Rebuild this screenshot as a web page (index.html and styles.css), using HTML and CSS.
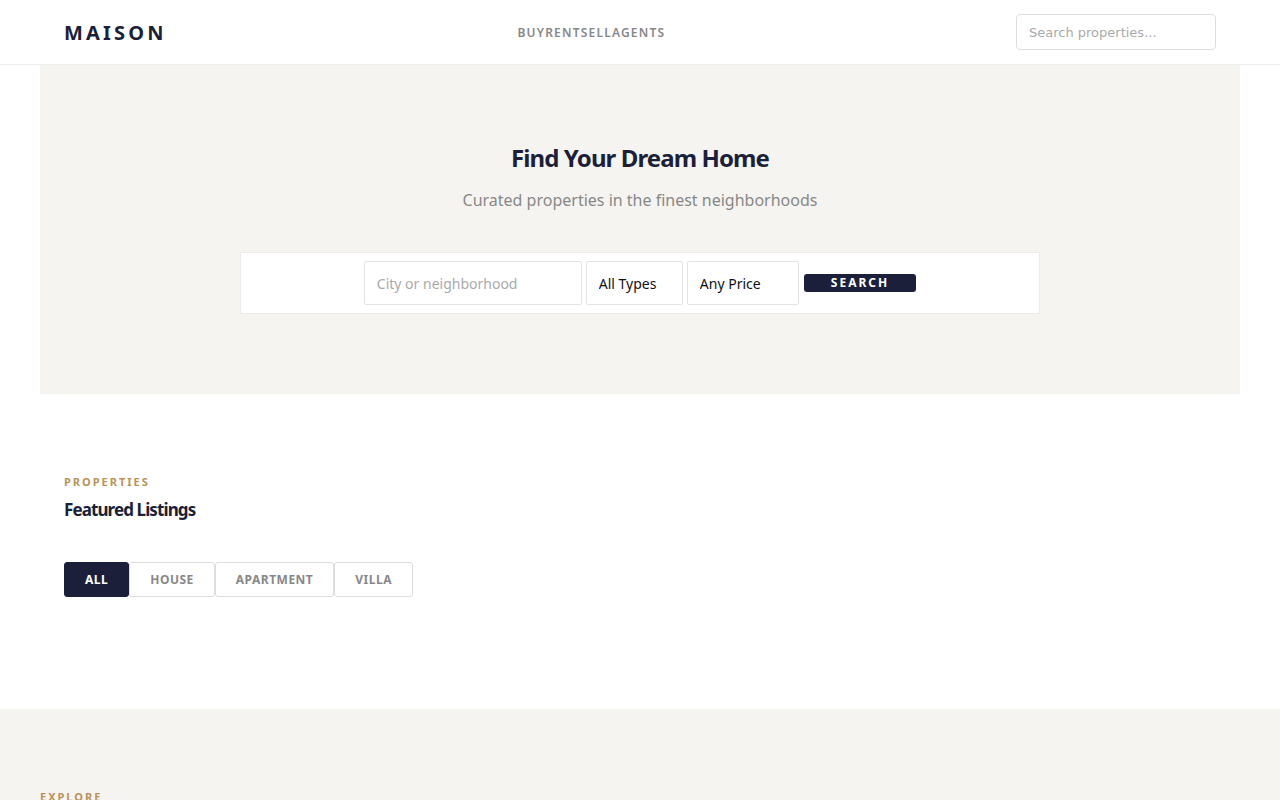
FILE: index.html
```html
<!DOCTYPE html>
<html lang="en">
<head>
  <meta charset="UTF-8" />
  <meta name="viewport" content="width=device-width, initial-scale=1.0"/>
  <title>Maison — Real Estate</title>
  <link rel="stylesheet" href="styles.css">
</head>
<body>

<header class="topbar">
  <div class="logo">MAISON</div>
  <nav class="nav">
    <a href="#">BUY</a><a href="#">RENT</a><a href="#">SELL</a><a href="#">AGENTS</a>
  </nav>
  <input class="top-search" type="text" placeholder="Search properties...">
</header>

<section class="hero">
  <h1>Find Your Dream Home</h1>
  <p class="hero-sub">Curated properties in the finest neighborhoods</p>

  <form class="search-box" onsubmit="return false">
    <input class="field city" type="text" placeholder="City or neighborhood">
    <select class="field">
      <option>All Types</option>
      <option>House</option>
      <option>Apartment</option>
      <option>Villa</option>
    </select>
    <select class="field">
      <option>Any Price</option>
      <option>Under $500K</option>
      <option>$500K - $1M</option>
      <option>$1M+</option>
    </select>
    <button class="search-btn">SEARCH</button>
  </form>
</section>

<section class="listings">
  <div class="label">PROPERTIES</div>
  <h2>Featured Listings</h2>

  <div class="filters">
    <button class="filter active">ALL</button>
    <button class="filter">HOUSE</button>
    <button class="filter">APARTMENT</button>
    <button class="filter">VILLA</button>
  </div>

  <div class="grid" id="grid"></div>
</section>

<section class="explore">
  <div class="inner">
    <div class="label">EXPLORE</div>
    <h2>Popular Neighborhoods</h2>
  </div>
</section>

</body>
</html>
```

FILE: styles.css
```css
* { margin: 0; padding: 0; box-sizing: border-box; }

body {
  font-family: 'Noto Sans', sans-serif;
  color: #1b1f3a;
  background: #fff;
}

/* header */
.topbar {
  height: 65px;
  padding: 0 64px;
  display: flex;
  align-items: center;
  justify-content: space-between;
  border-bottom: 1px solid #ededed;
}

.logo {
  font-size: 20px;
  font-weight: 700;
  letter-spacing: 3.2px;
  color: #1b1f3a;
}

.nav {
  margin-bottom: 2px;
}

.nav a {
  font-size: 12px;
  font-weight: 600;
  letter-spacing: 1.2px;
  color: #888;
  text-decoration: none;
}

.top-search {
  width: 200px;
  height: 36px;
  padding: 0 12px;
  border: 1px solid #ddd;
  border-radius: 4px;
  font-family: 'DejaVu Sans', sans-serif;
  font-size: 13px;
  color: #333;
}

.top-search::placeholder { color: #aaa; }

/* hero */
.hero {
  max-width: 1200px;
  margin: 0 auto;
  background: #f5f4f0;
  padding: 76px 0 80px;
  text-align: center;
}

.hero h1 {
  font-size: 24px;
  font-weight: 700;
  letter-spacing: -0.9px;
  color: #1b1f3a;
  margin-bottom: 15px;
}

.hero-sub {
  font-size: 16px;
  color: #888;
  margin-bottom: 41px;
}

.search-box {
  width: 800px;
  margin: 0 auto;
  background: #fff;
  border: 1px solid #ebebeb;
  padding: 8px;
  display: flex;
  justify-content: center;
  align-items: center;
  gap: 4px;
}

.field {
  height: 44px;
  padding: 0 12px;
  border: 1px solid #e3e3e3;
  border-radius: 2px;
  background: #fff;
  font-family: 'Noto Sans', sans-serif;
  font-size: 14px;
  color: #111;
  appearance: none;
  -webkit-appearance: none;
}

.field.city { width: 218px; }
.field::placeholder { color: #aaa; }

.search-btn {
  margin-left: 1px;
  padding: 1px 27px;
  border: none;
  border-radius: 3px;
  background: #1b1f3a;
  color: #fff;
  font-family: 'Noto Sans', sans-serif;
  font-size: 12px;
  font-weight: 700;
  letter-spacing: 2px;
  line-height: 16px;
  cursor: pointer;
}

/* listings */
.listings {
  max-width: 1200px;
  margin: 0 auto;
  padding: 80px 24px;
}

.label {
  font-size: 11px;
  font-weight: 700;
  letter-spacing: 2px;
  color: #b8935a;
  margin-bottom: 9px;
}

h2 {
  font-size: 17px;
  font-weight: 700;
  letter-spacing: -0.9px;
  color: #1b1f3a;
}

.filters {
  display: flex;
  margin-top: 41px;
}

.filter {
  padding: 8px 20px;
  line-height: 17px;
  border: 1px solid #ddd;
  border-radius: 3px;
  background: #fff;
  color: #888;
  font-family: 'Noto Sans', sans-serif;
  font-size: 12px;
  font-weight: 700;
  letter-spacing: 0.5px;
  cursor: pointer;
}

.filter.active {
  background: #1b1f3a;
  border-color: #1b1f3a;
  color: #fff;
}

.grid {
  margin-top: 32px;
  display: grid;
  grid-template-columns: repeat(3, 1fr);
  gap: 24px;
}

/* explore */
.explore {
  background: #f5f4f0;
  padding: 80px 0;
}

.explore .inner {
  max-width: 1200px;
  margin: 0 auto;
}
```
